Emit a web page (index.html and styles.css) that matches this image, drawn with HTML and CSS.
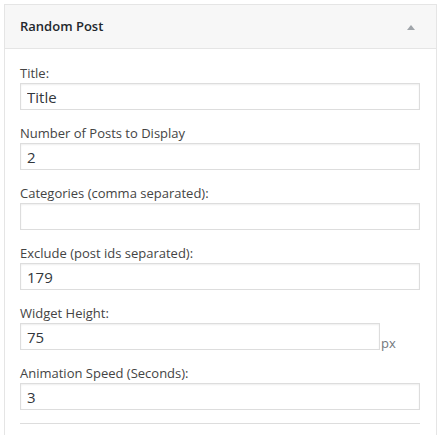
FILE: index.html
```html
<!DOCTYPE html>
<html>
<head>
<meta charset="utf-8">
<link rel="stylesheet" href="styles.css">
</head>
<body>
<div class="widget">
  <div class="widget-top">
    <h3 class="widget-title">Random Post</h3>
    <span class="toggle"></span>
  </div>
  <div class="widget-inside">
    <div class="field">
      <label class="label">Title:</label>
      <input class="input" type="text" value="Title">
    </div>
    <div class="field">
      <label class="label">Number of Posts to Display</label>
      <input class="input" type="text" value="2">
    </div>
    <div class="field">
      <label class="label">Categories (comma separated):</label>
      <input class="input" type="text" value="">
    </div>
    <div class="field">
      <label class="label">Exclude (post ids separated):</label>
      <input class="input" type="text" value="179">
    </div>
    <div class="field">
      <label class="label">Widget Height:</label>
      <div class="row">
        <input class="input input-short" type="text" value="75"><span class="unit">px</span>
      </div>
    </div>
    <div class="field">
      <label class="label">Animation Speed (Seconds):</label>
      <input class="input" type="text" value="3">
    </div>
    <div class="divider"></div>
  </div>
</div>
</body>
</html>
```
FILE: styles.css
```css
html, body {
  margin: 0;
  padding: 0;
  background: #ffffff;
}
body {
  font-family: "Open Sans", "Liberation Sans", sans-serif;
  color: #32373c;
  padding: 4px 0 0 4px;
}
.widget {
  width: 431px;
  height: 430px;
  border: 1px solid #e5e5e5;
  border-bottom: none;
  box-sizing: content-box;
  overflow: hidden;
}
.widget-top {
  height: 43px;
  background: #f7f7f7;
  border-bottom: 1px solid #e5e5e5;
  display: flex;
  align-items: center;
  justify-content: space-between;
  padding: 0 21px 0 15px;
}
.widget-title {
  margin: 0;
  font-size: 13px;
  font-weight: 600;
  color: #23282d;
  line-height: 18px;
  padding-bottom: 1px;
}
.toggle {
  width: 0;
  height: 0;
  border-left: 4px solid transparent;
  border-right: 4px solid transparent;
  border-bottom: 5px solid #a0a5aa;
  margin-top: 1px;
}
.widget-inside {
  padding: 16px 15px 0 15px;
}
.field {
  margin-bottom: 15px;
}
.label {
  display: block;
  font-size: 13px;
  line-height: 18px;
  color: #444;
  margin-top: -1px;
  margin-bottom: 1px;
}
.input {
  display: block;
  box-sizing: border-box;
  width: 400px;
  height: 27px;
  margin: 0;
  padding: 0 6px;
  border: 1px solid #ddd;
  box-shadow: inset 0 1px 2px rgba(0,0,0,0.07);
  font-family: "Open Sans", "Liberation Sans", sans-serif;
  font-size: 15px;
  color: #32373c;
  background: #fff;
  outline: none;
}
.row {
  display: flex;
  align-items: flex-end;
}
.input-short {
  width: 360px;
}
.unit {
  font-size: 13px;
  color: #72777c;
  line-height: 18px;
  margin-left: 1px;
  margin-bottom: -2px;
}
.divider {
  width: 400px;
  height: 1px;
  background: #ddd;
  margin-top: -2px;
}
```
